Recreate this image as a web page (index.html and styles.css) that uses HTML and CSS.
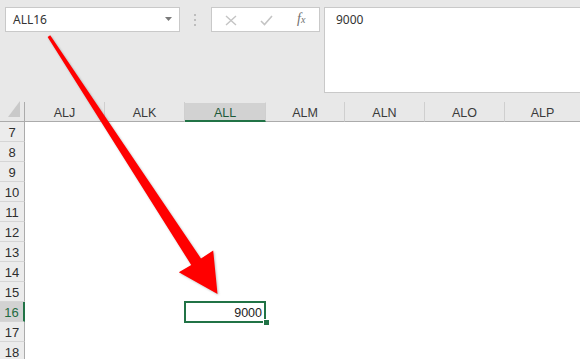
FILE: index.html
```html
<!DOCTYPE html>
<html>
<head>
<meta charset="utf-8">
<link rel="stylesheet" href="styles.css">
</head>
<body>
<div class="app">
  <div class="toolbar">
    <div class="namebox">
      <span class="nb-text">ALL16</span>
      <svg class="dd" width="8" height="5" viewBox="0 0 8 5"><path d="M0 0 H7 L3.5 4 Z" fill="#7a7a7a"/></svg>
    </div>
    <div class="sep">
      <svg width="3" height="14" viewBox="0 0 3 14"><rect x="0" y="0" width="2" height="2" fill="#bdbdbd"/><rect x="0" y="5" width="2" height="2" fill="#bdbdbd"/><rect x="0" y="10" width="2" height="2" fill="#bdbdbd"/></svg>
    </div>
    <div class="fbtns">
      <svg class="ic" width="12" height="11" viewBox="0 0 12 11"><path d="M1 1 L11 10 M11 1 L1 10" stroke="#c4c4c4" stroke-width="1.4" fill="none"/></svg>
      <svg class="ic" width="13" height="11" viewBox="0 0 13 11"><path d="M1 6 L4.5 9.5 L12 1" stroke="#c4c4c4" stroke-width="1.6" fill="none"/></svg>
      <span class="fx">f<span class="fx-x">x</span></span>
    </div>
    <div class="formula">9000</div>
  </div>

  <div class="sheet">
    <div class="corner"><svg width="13" height="17" viewBox="0 0 13 17"><path d="M12 0 V16 H0 Z" fill="#c9c9c9"/></svg></div>
    <div class="ch">ALJ</div>
    <div class="ch">ALK</div>
    <div class="ch sel">ALL</div>
    <div class="ch">ALM</div>
    <div class="ch">ALN</div>
    <div class="ch">ALO</div>
    <div class="ch last">ALP</div>

    <div class="rh">7</div><div class="row"></div>
    <div class="rh">8</div><div class="row"></div>
    <div class="rh">9</div><div class="row"></div>
    <div class="rh">10</div><div class="row"></div>
    <div class="rh">11</div><div class="row"></div>
    <div class="rh">12</div><div class="row"></div>
    <div class="rh">13</div><div class="row"></div>
    <div class="rh">14</div><div class="row"></div>
    <div class="rh">15</div><div class="row"></div>
    <div class="rh sel">16</div>
    <div class="row r16">
      <div class="cell-sel"><span class="val">9000</span><span class="handle"></span></div>
    </div>
    <div class="rh">17</div><div class="row"></div>
    <div class="rh">18</div><div class="row"></div>
  </div>

  <svg class="arrow" width="580" height="359" viewBox="0 0 580 359">
    <polygon points="47.6,37 50.2,35.2 201,258.5 213.2,250.6 217.5,294 178.8,272.2 191.2,265" fill="#ff0000"/>
  </svg>
</div>
</body>
</html>
```

FILE: styles.css
```css
* { box-sizing: border-box; }
html, body { margin: 0; padding: 0; }
body {
  width: 580px;
  height: 359px;
  overflow: hidden;
  background: #ffffff;
  font-family: "Liberation Sans", Arial, sans-serif;
}
.app {
  position: relative;
  width: 580px;
  height: 359px;
  overflow: hidden;
}
.toolbar {
  height: 102px;
  background: #e8e8e8;
  display: flex;
  align-items: flex-start;
  padding-top: 7px;
}
.namebox {
  margin-left: 5px;
  width: 175px;
  height: 25px;
  background: #fff;
  border: 1px solid #c9c9c9;
  display: flex;
  align-items: center;
  justify-content: space-between;
  padding: 0 6px 0 7px;
}
.nb-text {
  font-family: "Noto Sans", sans-serif;
  font-size: 12px;
  color: #333;
  margin-top: -1px;
}
.dd { display: block; margin-top: -1px; }
.sep {
  width: 31px;
  height: 25px;
  display: flex;
  align-items: center;
  justify-content: center;
  padding-top: 2px;
}
.sep svg { display: block; }
.fbtns {
  width: 109px;
  height: 25px;
  background: #fff;
  border: 1px solid #c9c9c9;
  display: flex;
  align-items: center;
  padding-left: 13px;
}
.fbtns .ic { display: block; margin-top: 2px; }
.fbtns .ic:first-child { margin-right: 23px; }
.fbtns .ic:nth-child(2) { margin-right: 24px; }
.fx {
  font-family: "Liberation Serif", serif;
  font-style: italic;
  font-size: 14px;
  color: #6f6f6f;
  margin-top: -2px;
}
.fx-x { font-size: 10px; }
.formula {
  margin-left: 4px;
  flex: 1;
  height: 86px;
  background: #fff;
  border: 1px solid #c9c9c9;
  border-right: none;
  font-family: "Noto Sans", sans-serif;
  font-size: 12px;
  color: #333;
  padding: 3px 0 0 11px;
}
.sheet {
  display: grid;
  grid-template-columns: 25px 80px 80px 81px 79px 80px 80px 1fr;
  grid-auto-rows: 20px;
}
.corner {
  background: #e8e8e8;
  border-right: 1px solid #ababab;
  border-bottom: 1px solid #ababab;
  display: flex;
  align-items: flex-end;
  justify-content: flex-end;
  padding: 0 3px 3px 0;
}
.corner svg { display: block; }
.ch {
  background: #e8e8e8;
  border-bottom: 1px solid #ababab;
  border-right: 1px solid #cfcfcf;
  font-size: 12.5px;
  color: #3a3a3a;
  display: flex;
  align-items: center;
  justify-content: center;
  padding-top: 2px;
}
.ch.last { border-right: none; }
.ch.sel {
  background: #d2d2d2;
  border-top: 1px solid #e8e8e8;
  border-bottom: 2px solid #217346;
  color: #1f5a3a;
}
.rh {
  background: #ececec;
  border-right: 1px solid #ababab;
  border-bottom: 1px solid #d5d5d5;
  font-size: 13px;
  color: #2e2e2e;
  display: flex;
  align-items: center;
  justify-content: center;
  padding-top: 1px;
}
.rh.sel {
  background: #d2d2d2;
  color: #1f6b41;
  border-right: 2px solid #217346;
}
.row {
  grid-column: 2 / -1;
  background: #fff;
}
.r16 {
  display: grid;
  grid-template-columns: 80px 80px 81px 1fr;
}
.cell-sel {
  grid-column: 3;
  position: relative;
  display: flex;
  align-items: center;
  justify-content: flex-end;
  padding-right: 4px;
  padding-top: 1px;
  font-size: 12.5px;
  color: #222;
}
.cell-sel::before {
  content: "";
  position: absolute;
  left: -1px;
  top: -1px;
  right: 0;
  bottom: -1px;
  border: 2px solid #217346;
}
.handle {
  position: absolute;
  right: -3px;
  bottom: -3px;
  width: 5px;
  height: 5px;
  background: #217346;
  border: 1px solid #fff;
  box-sizing: content-box;
  margin: -1px;
}
.arrow {
  position: absolute;
  left: 0;
  top: 0;
  pointer-events: none;
  filter: drop-shadow(1px 1px 1px rgba(0,0,0,0.25));
}
```
